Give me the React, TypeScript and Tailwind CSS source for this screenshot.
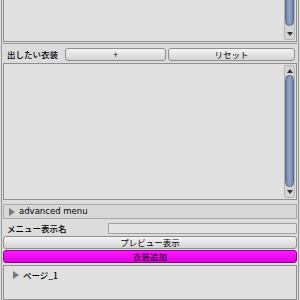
import React from 'react';

const jp = { fontFamily: '"Noto Sans CJK JP", "DejaVu Sans", sans-serif' };

const Scrollbar: React.FC<{ className?: string; thumbTop: number; thumbBottom: number; showUp?: boolean }> = ({ className = '', thumbTop, thumbBottom, showUp = true }) => (
  <div className={`relative w-[11px] overflow-hidden bg-[#d4d4d4] border border-[#b4b4b4] rounded-[2px] ${className}`}>
    {showUp && (
      <div className="absolute left-[2px] top-[3px] w-0 h-0 border-l-[3px] border-r-[3px] border-b-[4px] border-l-transparent border-r-transparent border-b-[#333]" />
    )}
    <div
      className="absolute left-0 right-0 rounded-[6px] border border-[#56698e] bg-gradient-to-r from-[#6f83aa] via-[#94a6c8] to-[#6f83aa]"
      style={{ top: thumbTop, bottom: thumbBottom }}
    />
    <div className="absolute left-[2px] bottom-[3px] w-0 h-0 border-l-[3px] border-r-[3px] border-t-[4px] border-l-transparent border-r-transparent border-t-[#333]" />
  </div>
);

const Btn: React.FC<{ children: React.ReactNode; className?: string }> = ({ children, className = '' }) => (
  <div
    className={`h-[13px] flex items-center justify-center rounded-[3px] border border-[#8e8e8e] bg-gradient-to-b from-[#f4f4f4] to-[#d4d4d4] text-[8.5px] text-black leading-none ${className}`}
    style={jp}
  >
    {children}
  </div>
);

const Tri: React.FC = () => (
  <span className="w-0 h-0 border-t-[4px] border-b-[4px] border-l-[6px] border-t-transparent border-b-transparent border-l-[#7a7a7a]" />
);

const App: React.FC = () => {
  return (
    <div className="w-[300px] h-[300px] overflow-hidden bg-[#dcdcdc] flex flex-col px-[1px]">
      <div className="flex-1 flex flex-col border-x border-[#9a9a9a] px-[1px]">
        {/* top list (scrolled off) */}
        <div className="h-[42px] flex justify-end border-x border-b border-[#8f8f8f] bg-[#e0e0e0] pr-[1px] pb-[1px]">
          <Scrollbar className="h-full border-t-0 rounded-t-none" thumbTop={-10} thumbBottom={13} showUp={false} />
        </div>

        {/* costume list */}
        <div className="mt-[1px] flex flex-col border-t border-[#9a9a9a]">
          <div className="h-[18px] flex items-center pt-[2px] pr-[2px]">
            <span className="w-[62px] pl-[4px] text-[8.5px] font-medium text-black leading-none" style={jp}>出したい衣装</span>
            <Btn className="w-[101px]">+</Btn>
            <Btn className="flex-1 ml-[2px]">リセット</Btn>
          </div>
          <div className="h-[137px] mt-[1px] flex justify-end border border-[#8f8f8f] bg-[#e0e0e0] p-[1px]">
            <Scrollbar className="h-full" thumbTop={9} thumbBottom={10} />
          </div>
        </div>

        {/* advanced menu foldout */}
        <div className="mt-[4px] h-[15px] flex items-center border border-[#a8a8a8] bg-[#d8d8d8] pl-[5px] gap-[4px]">
          <Tri />
          <span className="text-[8.5px] text-black leading-none" style={{ fontFamily: '"DejaVu Sans", sans-serif' }}>advanced menu</span>
        </div>

        {/* menu name */}
        <div className="mt-[2px] h-[14px] flex items-center">
          <span className="w-[105px] pl-[4px] text-[8.5px] font-medium text-black leading-none" style={jp}>メニュー表示名</span>
          <div className="flex-1 h-[11px] border border-[#a0a0a0] bg-[#e4e4e4] rounded-[1px]" />
        </div>

        <Btn className="mt-[1px]">プレビュー表示</Btn>
        <div
          className="mt-[1px] h-[13px] flex items-center justify-center rounded-[3px] border border-[#8a008a] bg-gradient-to-b from-[#ff18ff] to-[#dd00dd] text-[8.5px] text-black leading-none"
          style={jp}
        >
          衣装追加
        </div>

        {/* pages */}
        <div className="mt-[2px] flex-1 border border-[#8f8f8f] bg-[#e0e0e0] pt-[5px] pl-[9px]">
          <div className="flex items-center gap-[4px]">
            <Tri />
            <span className="text-[8.5px] font-medium text-black leading-none" style={jp}>ページ_1</span>
          </div>
        </div>
      </div>
    </div>
  );
};

export default App;
